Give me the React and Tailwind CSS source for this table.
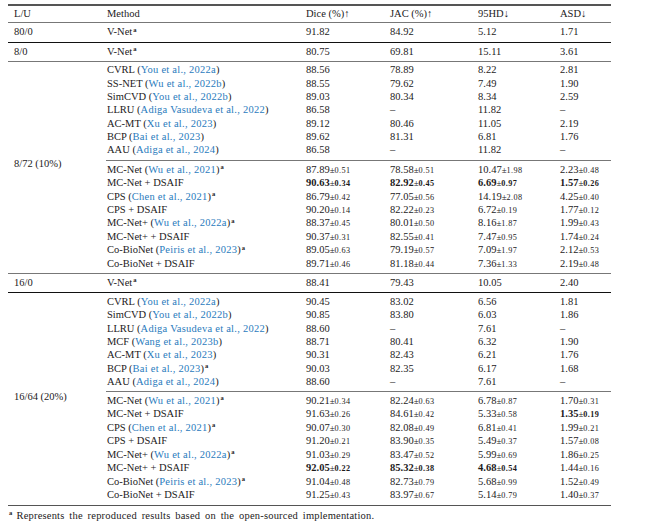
import React from "react";

const FONT = { fontFamily: '"Liberation Serif", "Times New Roman", serif' };

const blockA8 = [
  ["CVRL", "You et al., 2022a", false, ["88.56", "78.89", "8.22", "2.81"]],
  ["SS-NET", "Wu et al., 2022b", false, ["88.55", "79.62", "7.49", "1.90"]],
  ["SimCVD", "You et al., 2022b", false, ["89.03", "80.34", "8.34", "2.59"]],
  ["LLRU", "Adiga Vasudeva et al., 2022", false, ["86.58", "–", "11.82", "–"]],
  ["AC-MT", "Xu et al., 2023", false, ["89.12", "80.46", "11.05", "2.19"]],
  ["BCP", "Bai et al., 2023", false, ["89.62", "81.31", "6.81", "1.76"]],
  ["AAU", "Adiga et al., 2024", false, ["86.58", "–", "11.82", "–"]],
];

const blockB8 = [
  ["MC-Net", "Wu et al., 2021", true, [["87.89", "0.51"], ["78.58", "0.51"], ["10.47", "1.98"], ["2.23", "0.48"]]],
  ["MC-Net + DSAIF", null, false, [["90.63", "0.34", 1], ["82.92", "0.45", 1], ["6.69", "0.97", 1], ["1.57", "0.26", 1]]],
  ["CPS", "Chen et al., 2021", true, [["86.79", "0.42"], ["77.05", "0.56"], ["14.19", "2.08"], ["4.25", "0.40"]]],
  ["CPS + DSAIF", null, false, [["90.20", "0.14"], ["82.22", "0.23"], ["6.72", "0.19"], ["1.77", "0.12"]]],
  ["MC-Net+", "Wu et al., 2022a", true, [["88.37", "0.45"], ["80.01", "0.50"], ["8.16", "1.87"], ["1.99", "0.43"]]],
  ["MC-Net+ + DSAIF", null, false, [["90.37", "0.31"], ["82.55", "0.41"], ["7.47", "0.95"], ["1.74", "0.24"]]],
  ["Co-BioNet", "Peiris et al., 2023", true, [["89.05", "0.63"], ["79.19", "0.57"], ["7.09", "1.97"], ["2.12", "0.53"]]],
  ["Co-BioNet + DSAIF", null, false, [["89.71", "0.46"], ["81.18", "0.44"], ["7.36", "1.33"], ["2.19", "0.48"]]],
];

const blockA16 = [
  ["CVRL", "You et al., 2022a", false, ["90.45", "83.02", "6.56", "1.81"]],
  ["SimCVD", "You et al., 2022b", false, ["90.85", "83.80", "6.03", "1.86"]],
  ["LLRU", "Adiga Vasudeva et al., 2022", false, ["88.60", "–", "7.61", "–"]],
  ["MCF", "Wang et al., 2023b", false, ["88.71", "80.41", "6.32", "1.90"]],
  ["AC-MT", "Xu et al., 2023", false, ["90.31", "82.43", "6.21", "1.76"]],
  ["BCP", "Bai et al., 2023", true, ["90.03", "82.35", "6.17", "1.68"]],
  ["AAU", "Adiga et al., 2024", false, ["88.60", "–", "7.61", "–"]],
];

const blockB16 = [
  ["MC-Net", "Wu et al., 2021", true, [["90.21", "0.34"], ["82.24", "0.63"], ["6.78", "0.87"], ["1.70", "0.31"]]],
  ["MC-Net + DSAIF", null, false, [["91.63", "0.26"], ["84.61", "0.42"], ["5.33", "0.58"], ["1.35", "0.19", 1]]],
  ["CPS", "Chen et al., 2021", true, [["90.07", "0.30"], ["82.08", "0.49"], ["6.81", "0.41"], ["1.99", "0.21"]]],
  ["CPS + DSAIF", null, false, [["91.20", "0.21"], ["83.90", "0.35"], ["5.49", "0.37"], ["1.57", "0.08"]]],
  ["MC-Net+", "Wu et al., 2022a", true, [["91.03", "0.29"], ["83.47", "0.52"], ["5.99", "0.69"], ["1.86", "0.25"]]],
  ["MC-Net+ + DSAIF", null, false, [["92.05", "0.22", 1], ["85.32", "0.38", 1], ["4.68", "0.54", 1], ["1.44", "0.16"]]],
  ["Co-BioNet", "Peiris et al., 2023", true, [["91.04", "0.48"], ["82.73", "0.79"], ["5.68", "0.99"], ["1.52", "0.49"]]],
  ["Co-BioNet + DSAIF", null, false, [["91.25", "0.43"], ["83.97", "0.67"], ["5.14", "0.79"], ["1.40", "0.37"]]],
];

const Sup = () => (
  <span className="inline-block text-[6.5px] font-bold relative top-[-3.5px] ml-[1px] leading-none">a</span>
);

function Method({ name, cite, sup }) {
  return (
    <span className="whitespace-nowrap">
      {name}
      {cite && (
        <>
          {" ("}
          <span className="text-[#2a7bbd] tracking-[0.25px]">{cite}</span>
          {")"}
        </>
      )}
      {sup && <Sup />}
    </span>
  );
}

function Val({ v }) {
  if (typeof v === "string") return <span>{v}</span>;
  const [n, pm, b] = v;
  return (
    <span className="whitespace-nowrap">
      <span className={b ? "font-bold" : ""}>{n}</span>
      <span className="text-[9px]">±</span>
      <span className={"text-[8.2px] tracking-[0.4px] " + (b ? "font-bold" : "")}>{pm}</span>
    </span>
  );
}

const widths = ["w-[84px]", "w-[88px]", "w-[82px]", "w-[51px]"];

function Row({ r, h = "h-[13.4px]" }) {
  const [name, cite, sup, vals] = r;
  return (
    <div className={"flex items-center " + h}>
      <div className="w-[199px]">
        <Method name={name} cite={cite} sup={sup} />
      </div>
      {vals.map((v, i) => (
        <div key={i} className={widths[i]}>
          <Val v={v} />
        </div>
      ))}
    </div>
  );
}

function SingleRow({ label, h, children }) {
  return (
    <div className={"flex items-center " + h}>
      <div className="w-[99px] pl-[6px]">{label}</div>
      {children}
    </div>
  );
}

export default function App() {
  return (
    <div
      className="w-[664px] h-[528px] bg-white text-[#1c1a1b] text-[10.5px] leading-none pt-[4px] overflow-hidden"
      style={FONT}
    >
      <div className="ml-[8px] w-[603px]">
        <div className="h-[1.5px] bg-[#555]" />
        <SingleRow label="L/U" h="h-[16.5px]">
          <div className="flex items-center">
            <div className="w-[199px]">Method</div>
            <div className="w-[84px]">Dice (%)↑</div>
            <div className="w-[88px]">JAC (%)↑</div>
            <div className="w-[82px]">95HD↓</div>
            <div className="w-[51px]">ASD↓</div>
          </div>
        </SingleRow>
        <div className="h-px bg-[#777]" />
        <SingleRow label="80/0" h="h-[19px]">
          <Row r={["V-Net", null, true, ["91.82", "84.92", "5.12", "1.71"]]} h="h-[19px]" />
        </SingleRow>
        <div className="h-px bg-[#111]" />
        <SingleRow label="8/0" h="h-[18px]">
          <Row r={["V-Net", null, true, ["80.75", "69.81", "15.11", "3.61"]]} h="h-[18px]" />
        </SingleRow>
        <div className="h-px bg-[#777]" />
        <div className="flex">
          <div className="w-[99px] pl-[6px] flex items-center pb-[6px]">8/72 (10%)</div>
          <div className="flex flex-col">
            <div className="pt-[1.7px] pb-[2.5px]">
              {blockA8.map((r, i) => (
                <Row key={i} r={r} />
              ))}
            </div>
            <div className="h-px bg-[#777] -ml-[1px]" />
            <div className="pt-[2.4px] pb-[2.2px]">
              {blockB8.map((r, i) => (
                <Row key={i} r={r} h="h-[13.43px]" />
              ))}
            </div>
          </div>
        </div>
        <div className="h-px bg-[#777]" />
        <SingleRow label="16/0" h="h-[18px]">
          <Row r={["V-Net", null, true, ["88.41", "79.43", "10.05", "2.40"]]} h="h-[18px]" />
        </SingleRow>
        <div className="h-px bg-[#111]" />
        <div className="flex">
          <div className="w-[99px] pl-[6px] flex items-center pb-[4px]">16/64 (20%)</div>
          <div className="flex flex-col">
            <div className="pt-[2.5px] pb-[1.7px]">
              {blockA16.map((r, i) => (
                <Row key={i} r={r} />
              ))}
            </div>
            <div className="h-px bg-[#777] -ml-[1px]" />
            <div className="pt-[2.7px] pb-[2.8px]">
              {blockB16.map((r, i) => (
                <Row key={i} r={r} h="h-[13.44px]" />
              ))}
            </div>
          </div>
        </div>
        <div className="h-[1.5px] bg-[#555]" />
        <div className="flex items-center h-[19px] pl-[1px] text-[10.5px] tracking-[0.2px] [word-spacing:2px]">
          <span className="text-[6.5px] font-bold relative top-[-2.5px] mr-[4px]">a</span>
          <span>Represents the reproduced results based on the open-sourced implementation.</span>
        </div>
      </div>
    </div>
  );
}
